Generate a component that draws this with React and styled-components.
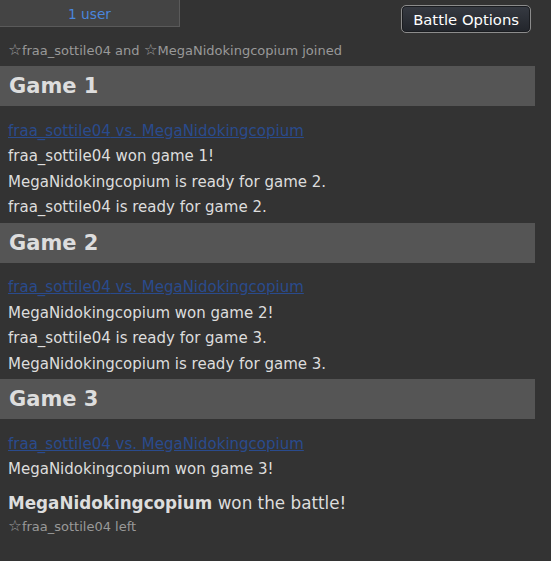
import React from "react";
import styled, { createGlobalStyle } from "styled-components";

const GlobalStyle = createGlobalStyle`
  html, body {
    margin: 0;
    padding: 0;
    background: #333333;
  }
  body {
    font-family: "DejaVu Sans", Verdana, sans-serif;
    color: #dddddd;
  }
`;

const Page = styled.div`
  width: 535px;
  height: 561px;
  overflow: hidden;
`;

const TopBar = styled.div`
  display: flex;
  justify-content: space-between;
  align-items: flex-start;
  height: 38px;
  width: 551px;
`;

const UserBox = styled.div`
  width: 180px;
  height: 27px;
  padding-top: 1px;
  box-sizing: border-box;
  background: #444444;
  border-right: 1px solid #5a5a5a;
  border-bottom: 1px solid #5a5a5a;
  display: flex;
  align-items: center;
  justify-content: center;
  color: #4a86dc;
  font-size: 13.7px;
`;

const OptionsButton = styled.button`
  margin: 5px 20px 0 0;
  height: 28px;
  padding: 0 11px;
  border: 1px solid #8c8c8c;
  border-radius: 5px;
  box-shadow: inset 0 0 0 1px #1a1c20;
  background: linear-gradient(#363a42, #22252b);
  color: #ffffff;
  font-family: "DejaVu Sans", Verdana, sans-serif;
  font-size: 14.8px;
  cursor: pointer;
`;

const Notice = styled.div`
  height: 28px;
  line-height: 26px;
  padding-left: 8px;
  font-size: 13px;
  color: #999999;
`;

const Star = styled.span`
  font-size: 15.5px;
  line-height: 1;
`;

const GameHeader = styled.h2`
  margin: 0;
  height: 40px;
  line-height: 41px;
  padding-left: 9px;
  background: #555555;
  color: #dddddd;
  font-size: 21px;
  font-weight: bold;
`;

const Section = styled.div`
  padding: 12.5px 0 ${({ last }) => (last ? "0" : "2px")} 0;
`;

const Line = styled.div`
  height: 25.5px;
  line-height: 25.5px;
  padding-left: 8px;
  font-size: 15px;
  color: #dddddd;
  white-space: nowrap;
`;

const MatchLink = styled.a`
  color: #2a4b8d;
  text-decoration: underline;
  cursor: pointer;
`;

const Result = styled.div`
  margin-top: 7px;
  height: 26px;
  line-height: 26px;
  padding-left: 8px;
  font-size: 16.8px;
  color: #dddddd;
  strong {
    font-weight: bold;
  }
`;

const LeftNotice = styled.div`
  height: 20px;
  line-height: 22px;
  padding-left: 8px;
  font-size: 13px;
  color: #999999;
`;

const p1 = "fraa_sottile04";
const p2 = "MegaNidokingcopium";

const games = [
  {
    title: "Game 1",
    lines: [
      `${p1} won game 1!`,
      `${p2} is ready for game 2.`,
      `${p1} is ready for game 2.`,
    ],
  },
  {
    title: "Game 2",
    lines: [
      `${p2} won game 2!`,
      `${p1} is ready for game 3.`,
      `${p2} is ready for game 3.`,
    ],
  },
  {
    title: "Game 3",
    lines: [`${p2} won game 3!`],
  },
];

const App = () => {
  return (
    <>
      <GlobalStyle />
      <Page>
        <TopBar>
          <UserBox>1 user</UserBox>
          <OptionsButton>Battle Options</OptionsButton>
        </TopBar>
        <Notice>
          <Star>☆</Star>
          {p1} and <Star>☆</Star>
          {p2} joined
        </Notice>
        {games.map((game, index) => (
          <React.Fragment key={game.title}>
            <GameHeader>{game.title}</GameHeader>
            <Section last={index === games.length - 1}>
              <Line>
                <MatchLink>
                  {p1} vs. {p2}
                </MatchLink>
              </Line>
              {game.lines.map((text) => (
                <Line key={text}>{text}</Line>
              ))}
            </Section>
          </React.Fragment>
        ))}
        <Result>
          <strong>{p2}</strong> won the battle!
        </Result>
        <LeftNotice>
          <Star>☆</Star>
          {p1} left
        </LeftNotice>
      </Page>
    </>
  );
};

export default App;
